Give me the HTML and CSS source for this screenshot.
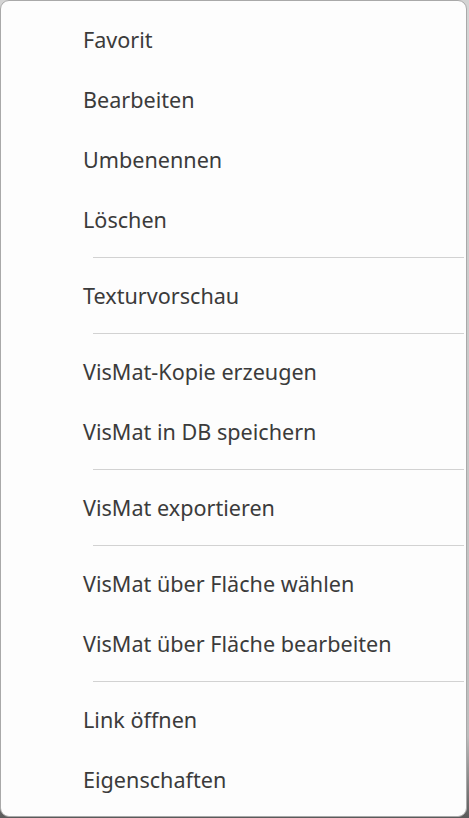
FILE: index.html
```html
<!DOCTYPE html>
<html lang="de">
<head>
<meta charset="utf-8">
<link rel="stylesheet" href="styles.css">
</head>
<body>
<div class="menu">
  <div class="item">Favorit</div>
  <div class="item">Bearbeiten</div>
  <div class="item">Umbenennen</div>
  <div class="item">Löschen</div>
  <div class="sep"></div>
  <div class="item">Texturvorschau</div>
  <div class="sep"></div>
  <div class="item">VisMat-Kopie erzeugen</div>
  <div class="item">VisMat in DB speichern</div>
  <div class="sep"></div>
  <div class="item">VisMat exportieren</div>
  <div class="sep"></div>
  <div class="item">VisMat über Fläche wählen</div>
  <div class="item">VisMat über Fläche bearbeiten</div>
  <div class="sep"></div>
  <div class="item">Link öffnen</div>
  <div class="item">Eigenschaften</div>
</div>
</body>
</html>
```

FILE: styles.css
```css
html, body {
  margin: 0;
  padding: 0;
}
body {
  width: 469px;
  height: 818px;
  overflow: hidden;
  background: linear-gradient(#d4d4d4, #bdbdbd 90%, #5a5a5a);
}
.menu {
  box-sizing: border-box;
  width: 467px;
  height: 817px;
  background: #fdfdfd;
  border: 1px solid #a9a9a9;
  border-radius: 9px;
  padding: 10px 0 0 0;
  display: flex;
  flex-direction: column;
  font-family: "Noto Sans", "Open Sans", sans-serif;
  font-size: 21.6px;
  color: #3b3b3b;
}
.item {
  height: 60px;
  display: flex;
  align-items: center;
  padding-left: 82px;
  padding-bottom: 3px;
  box-sizing: border-box;
}
.sep {
  height: 16px;
  padding-top: 6px;
  box-sizing: border-box;
  margin-left: 92px;
  margin-right: 2px;
}
.sep::before {
  content: "";
  display: block;
  height: 1px;
  background: #d2d2d2;
}
```
